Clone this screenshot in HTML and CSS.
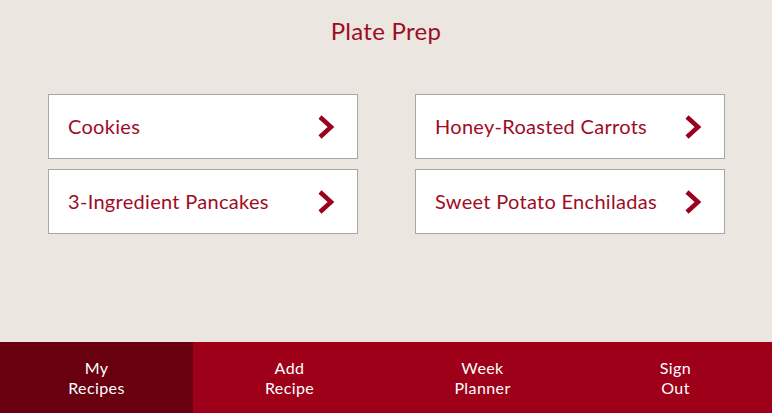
FILE: index.html
```html
<!DOCTYPE html>
<html lang="en">
<head>
    <meta charset="UTF-8">
    <meta name="viewport" content="width=device-width, initial-scale=1.0">
    <title>Plate Prep</title>
    <link rel="stylesheet" href="styles.css">
</head>
<body>
    <h1 class="title">Plate Prep</h1>
    <div class="recipes">
        <a class="recipe" href="#">
            <span>Cookies</span>
            <svg class="chevron" viewBox="0 0 18 26"><polyline points="3,3 14,13 3,23"/></svg>
        </a>
        <a class="recipe" href="#">
            <span>Honey-Roasted Carrots</span>
            <svg class="chevron" viewBox="0 0 18 26"><polyline points="3,3 14,13 3,23"/></svg>
        </a>
        <a class="recipe" href="#">
            <span>3-Ingredient Pancakes</span>
            <svg class="chevron" viewBox="0 0 18 26"><polyline points="3,3 14,13 3,23"/></svg>
        </a>
        <a class="recipe" href="#">
            <span>Sweet Potato Enchiladas</span>
            <svg class="chevron" viewBox="0 0 18 26"><polyline points="3,3 14,13 3,23"/></svg>
        </a>
    </div>
    <nav class="tabs">
        <a class="tab active" href="#">My<br>Recipes</a>
        <a class="tab" href="#">Add<br>Recipe</a>
        <a class="tab" href="#">Week<br>Planner</a>
        <a class="tab" href="#">Sign<br>Out</a>
    </nav>
</body>
</html>
```

FILE: styles.css
```css
body {
    font-family: Lato, "Open Sans", sans-serif;
    margin: 0;
    background-color: #ebe6e0;
    color: #9e0c24;
    height: 100vh;
    display: flex;
    flex-direction: column;
}
.title {
    margin: 16px 0 0;
    font-size: 24px;
    font-weight: 400;
    letter-spacing: 0.3px;
    line-height: 30px;
    text-align: center;
}
.recipes {
    display: grid;
    grid-template-columns: 310px 310px;
    column-gap: 57px;
    row-gap: 10px;
    margin: 48px 0 0 48px;
}
.recipe {
    display: flex;
    align-items: center;
    justify-content: space-between;
    height: 63px;
    padding: 0 22px 0 19px;
    background: white;
    border: 1px solid #aaa7a4;
    color: #9e0c24;
    text-decoration: none;
    font-size: 20px;
    letter-spacing: 0.3px;
    line-height: 24px;
}
.recipe span {
    margin-top: -2px;
}
.chevron {
    width: 18px;
    height: 26px;
}
.chevron polyline {
    fill: none;
    stroke: #9b0020;
    stroke-width: 4.5;
    stroke-linejoin: miter;
}
.tabs {
    margin-top: auto;
    display: flex;
    height: 71px;
}
.tab {
    flex: 1;
    display: flex;
    align-items: center;
    justify-content: center;
    text-align: center;
    background-color: #9e0019;
    color: white;
    text-decoration: none;
    font-size: 16px;
    letter-spacing: 0.4px;
    line-height: 20px;
}
.tab.active {
    background-color: #690010;
}
```
